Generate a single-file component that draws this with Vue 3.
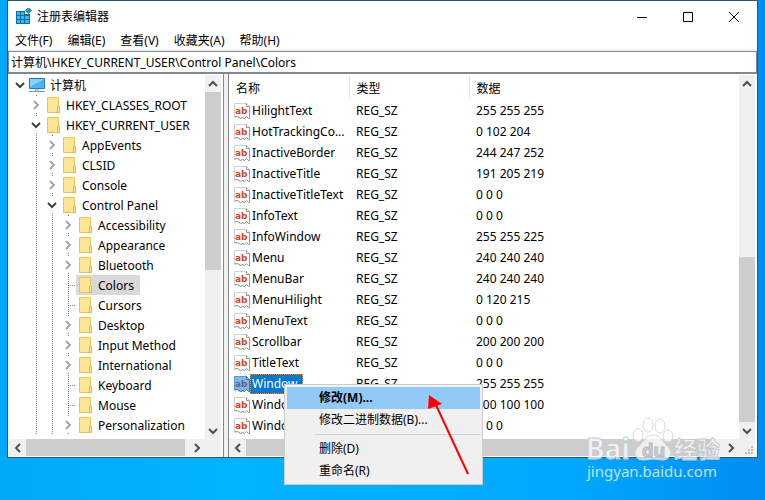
<script setup>
import { ref } from 'vue';

const address = ref('计算机\\HKEY_CURRENT_USER\\Control Panel\\Colors');

const menus = ['文件(F)', '编辑(E)', '查看(V)', '收藏夹(A)', '帮助(H)'];

const tree = [
  { name: '计算机', depth: 0, state: 'open', root: true },
  { name: 'HKEY_CLASSES_ROOT', depth: 1, state: 'closed' },
  { name: 'HKEY_CURRENT_USER', depth: 1, state: 'open' },
  { name: 'AppEvents', depth: 2, state: 'closed' },
  { name: 'CLSID', depth: 2, state: 'closed' },
  { name: 'Console', depth: 2, state: 'closed' },
  { name: 'Control Panel', depth: 2, state: 'open' },
  { name: 'Accessibility', depth: 3, state: 'closed' },
  { name: 'Appearance', depth: 3, state: 'closed' },
  { name: 'Bluetooth', depth: 3, state: 'closed' },
  { name: 'Colors', depth: 3, state: 'leaf' },
  { name: 'Cursors', depth: 3, state: 'leaf' },
  { name: 'Desktop', depth: 3, state: 'closed' },
  { name: 'Input Method', depth: 3, state: 'closed' },
  { name: 'International', depth: 3, state: 'closed' },
  { name: 'Keyboard', depth: 3, state: 'leaf' },
  { name: 'Mouse', depth: 3, state: 'leaf' },
  { name: 'Personalization', depth: 3, state: 'closed' }
];

const values = [
  ['HilightText', '255 255 255'],
  ['HotTrackingCo...', '0 102 204'],
  ['InactiveBorder', '244 247 252'],
  ['InactiveTitle', '191 205 219'],
  ['InactiveTitleText', '0 0 0'],
  ['InfoText', '0 0 0'],
  ['InfoWindow', '255 255 225'],
  ['Menu', '240 240 240'],
  ['MenuBar', '240 240 240'],
  ['MenuHilight', '0 120 215'],
  ['MenuText', '0 0 0'],
  ['Scrollbar', '200 200 200'],
  ['TitleText', '0 0 0'],
  ['Window', '255 255 255'],
  ['WindowFrame', '100 100 100'],
  ['WindowText', '0 0 0']
];

const selectedKey = ref('Colors');
const selectedValue = ref('Window');
</script>

<template>
  <div class="desktop">
    <main class="window">
      <header class="title-bar">
        <svg class="app-icon" width="16" height="16" viewBox="0 0 16 16">
          <path d="M0 3h9v3h5v10H0z" fill="#0c6ea6" />
          <path d="M1 4h3v3H1zM5 4h3v3H5zM1 8h3v3H1zM5 8h3v3H5zM9 8h4v3H9zM1 12h3v3H1zM5 12h3v3H5zM9 12h4v3H9z" fill="#3cb9e8" />
          <path d="M12.500 0l3 2.500-3 2.800-3-2.800z" fill="#2b9bd0" stroke="#0c6ea6" />
        </svg>
        <h1>注册表编辑器</h1>
        <div class="window-buttons">
          <button aria-label="最小化">
            <svg width="12" height="12"><path d="M1 6.500h10" /></svg>
          </button>
          <button aria-label="最大化">
            <svg width="12" height="12"><path d="M1.500 1.500h9v9h-9z" /></svg>
          </button>
          <button aria-label="关闭">
            <svg width="12" height="12"><path d="M1 1l10 10M11 1L1 11" /></svg>
          </button>
        </div>
      </header>

      <nav class="menu-bar">
        <button v-for="item in menus" :key="item">{{ item }}</button>
      </nav>

      <input class="address" v-model="address" aria-label="地址" />

      <div class="panes">
        <section class="pane tree-pane">
          <div class="pane-body">
            <ul class="tree">
              <li v-for="node in tree" :key="node.name" @click="selectedKey = node.name">
                <span
                  v-for="level in node.depth"
                  :key="level"
                  class="cell"
                  :class="{ guide: level > 1 }"
                ></span>
                <span class="cell" :class="[node.state, { guide: !node.root }]">
                  <svg v-if="node.state !== 'leaf'" class="expander" width="12" height="10" viewBox="0 0 12 10">
                    <path v-if="node.state === 'open'" d="M2 3l4 4 4-4" stroke="#404040" />
                    <path v-else d="M4 1l4 4-4 4" stroke="#a6a6a6" />
                  </svg>
                </span>
                <span class="node" :class="{ root: node.root, selected: node.name === selectedKey }">
                  <svg v-if="node.root" width="16" height="16" viewBox="0 0 16 16">
                    <path d="M.5 1.500h15v10H.5z" fill="#4fb3f0" stroke="#2779b5" />
                    <path d="M1 2h14L1 10z" fill="#8ad2fa" />
                    <path d="M6 12h4v2H6z" fill="#b8cbd8" />
                    <path d="M0 14.500h16" stroke="#7894a8" />
                  </svg>
                  <svg v-else width="14" height="16" viewBox="0 0 14 16">
                    <path d="M.5.5h11v9h1v6H.5z" fill="#ffe594" stroke="#e8c552" />
                    <path d="M10.500 9.500h2v6h-2z" fill="#ffe9a6" stroke="#dfb93c" />
                  </svg>
                  <span>{{ node.name }}</span>
                </span>
              </li>
            </ul>
            <div class="scroll vertical">
              <button aria-label="向上滚动"><svg width="10" height="8"><path d="M1 6l4-4 4 4" /></svg></button>
              <div class="track"><div class="thumb"></div></div>
              <button aria-label="向下滚动"><svg width="10" height="8"><path d="M1 2l4 4 4-4" /></svg></button>
            </div>
          </div>
          <div class="scroll horizontal">
            <button aria-label="向左滚动"><svg width="8" height="10"><path d="M6 1L2 5l4 4" /></svg></button>
            <div class="track"><div class="thumb"></div></div>
            <button aria-label="向右滚动"><svg width="8" height="10"><path d="M2 1l4 4-4 4" /></svg></button>
            <span class="corner"></span>
          </div>
        </section>

        <section class="pane list-pane">
          <div class="pane-body">
            <table>
              <thead>
                <tr>
                  <th class="short">名称</th>
                  <th class="short">类型</th>
                  <th>数据</th>
                </tr>
              </thead>
              <tbody>
                <tr
                  v-for="[name, data] in values"
                  :key="name"
                  :class="{ selected: name === selectedValue }"
                  @click="selectedValue = name"
                >
                  <td>
                    <div class="value-name">
                      <svg class="value-icon" width="16" height="16" viewBox="0 0 16 16">
                        <path class="paper" d="M.5.500h12l3 3v12h-1l-2-2-2 2-2-1-2 1-3-2-3 .5z" />
                        <path class="fold" d="M12.500.5v3h3v12h-1l-2-2-2 2-2-1-2 1-3-2-3 .5" fill="none" />
                        <text x="1" y="11">ab</text>
                      </svg>
                      <span>{{ name }}</span>
                    </div>
                  </td>
                  <td>REG_SZ</td>
                  <td>{{ data }}</td>
                </tr>
              </tbody>
            </table>
            <div class="scroll vertical">
              <button aria-label="向上滚动"><svg width="10" height="8"><path d="M1 6l4-4 4 4" /></svg></button>
              <div class="track end"><div class="thumb"></div></div>
              <button aria-label="向下滚动"><svg width="10" height="8"><path d="M1 2l4 4 4-4" /></svg></button>
            </div>
          </div>
          <div class="scroll horizontal">
            <button aria-label="向左滚动"><svg width="8" height="10"><path d="M6 1L2 5l4 4" /></svg></button>
            <div class="track"><div class="thumb"></div></div>
            <button aria-label="向右滚动"><svg width="8" height="10"><path d="M2 1l4 4-4 4" /></svg></button>
            <span class="corner">
              <svg width="10" height="10">
                <path d="M6 0h2v2H6zM3 3h2v2H3zM6 3h2v2H6zM0 6h2v2H0zM3 6h2v2H3zM6 6h2v2H6z" />
              </svg>
            </span>
          </div>
        </section>
      </div>
    </main>

    <div class="context-menu">
      <button class="active">修改(M)...</button>
      <button>修改二进制数据(B)...</button>
      <hr />
      <button>删除(D)</button>
      <button>重命名(R)</button>
    </div>

    <svg class="arrow" width="44" height="84" viewBox="0 0 44 84">
      <path d="M9 11l32 69" stroke="#f00" stroke-width="2" />
      <path d="M2 1l13 9-14 5z" fill="#f00" />
    </svg>

    <svg class="watermark" width="142" height="68" viewBox="0 0 142 68">
      <text class="brand" x="1" y="42">Bai</text>
      <g class="paw">
        <ellipse cx="53" cy="18" rx="5" ry="6.500" />
        <ellipse cx="63" cy="8" rx="5" ry="7" />
        <ellipse cx="75" cy="9" rx="5" ry="7" />
        <ellipse cx="83" cy="19" rx="5" ry="6" />
        <path d="M68 18c7 0 10 7 15 12 5 5 2 13-5 13-4 0-6-1-10-1s-6 1-10 1c-8 0-10-8-5-13 6-5 8-12 15-12z" />
      </g>
      <text class="du" x="57" y="40">du</text>
      <text class="brand cjk" x="89" y="41">经验</text>
      <text class="site" x="2" y="60">jingyan.baidu.com</text>
    </svg>
  </div>
</template>

<style>
body {
  margin: 0;
}
</style>

<style scoped>
* {
  box-sizing: border-box;
}

.desktop {
  position: relative;
  min-height: 100vh;
  padding: 0 7px;
  overflow: hidden;
  background: linear-gradient(90deg, #00a9fa 0%, #00b4ff 30%, #00a8ff 75%, #008df0 100%);
  color: #000;
  font-family: "Noto Sans", "Noto Sans CJK SC", sans-serif;
  font-size: 12px;
}

button {
  padding: 0;
  border: 0;
  background: none;
  color: inherit;
  font: inherit;
}

.window {
  border: 1px solid #245a80;
  background: #fff;
}

.title-bar {
  display: flex;
  align-items: center;
  height: 29px;
  padding-left: 8px;
}

.title-bar h1 {
  margin: 0 0 0 5px;
  font-size: 12px;
  font-weight: normal;
}

.window-buttons {
  display: flex;
  margin-left: auto;
}

.window-buttons button {
  width: 46px;
  height: 28px;
}

.window-buttons svg {
  vertical-align: middle;
  fill: none;
  stroke: #000;
}

.menu-bar {
  display: flex;
  gap: 15px;
  height: 21px;
  padding-left: 7px;
  border-bottom: 2px solid #f0f0f0;
}

.menu-bar button {
  height: 21px;
  line-height: 21px;
}

.address {
  display: block;
  width: 100%;
  height: 23px;
  padding: 0 2px;
  border: 1px solid #828790;
  border-bottom-width: 2px;
  outline: 0;
  color: #000;
  font: inherit;
}

.panes {
  display: flex;
  background: #f0f0f0;
}

.pane {
  display: flex;
  flex-direction: column;
  padding: 1px 2px 1px 1px;
  background: #fff;
}

.tree-pane {
  flex: 0 0 216px;
  margin-right: 4px;
  border-right: 1px solid #828790;
}

.list-pane {
  flex: 1;
  min-width: 0;
  padding-left: 0;
  border-left: 1px solid #828790;
}

.pane-body {
  display: flex;
  flex: 1;
}

.tree {
  flex: 1;
  min-width: 0;
  margin: 0;
  padding: 0 0 4px 3px;
  list-style: none;
}

.tree li {
  display: flex;
  height: 20px;
  white-space: nowrap;
}

.cell {
  display: flex;
  flex: 0 0 16px;
  align-items: center;
  justify-content: center;
}

.guide {
  background: repeating-linear-gradient(#808080 0 1px, transparent 1px 2px) 8px 0 / 1px 100% no-repeat;
}

.leaf {
  background:
    repeating-linear-gradient(#808080 0 1px, transparent 1px 2px) 8px 0 / 1px 100% no-repeat,
    repeating-linear-gradient(90deg, #808080 0 1px, transparent 1px 2px) 8px 10px / 8px 1px no-repeat;
}

.expander {
  box-sizing: content-box;
  padding: 3px 0;
  background: #fff;
  fill: none;
  stroke-width: 2;
}

.node {
  display: flex;
  align-items: center;
  gap: 5px;
  padding: 0 6px 0 3px;
}

.node.root {
  padding-left: 1px;
}

.node.selected {
  background: #d9d9d9;
}

.scroll {
  display: flex;
  background: #f0f0f0;
}

.scroll button {
  display: flex;
  flex: 0 0 17px;
  align-items: center;
  justify-content: center;
}

.scroll button svg {
  fill: none;
  stroke: #505050;
  stroke-width: 2;
}

.vertical {
  flex: 0 0 16px;
  flex-direction: column;
}

.horizontal {
  height: 17px;
}

.track {
  display: flex;
  flex: 1;
}

.vertical .track {
  flex-direction: column;
}

.track.end {
  justify-content: flex-end;
}

.thumb {
  flex: 0 0 98%;
  background: #cdcdcd;
}

.vertical .thumb {
  flex-basis: 54%;
}

.vertical .end .thumb {
  flex-basis: 50%;
}

.corner {
  display: flex;
  flex: 0 0 16px;
  align-items: flex-end;
  justify-content: flex-end;
  fill: #bfbfbf;
}

table {
  flex: 1;
  align-self: flex-start;
  width: 100%;
  border-collapse: collapse;
  table-layout: fixed;
}

th {
  height: 25px;
  padding: 0 7px;
  font-weight: normal;
  text-align: left;
}

th.short {
  width: 120px;
  border-right: 1px solid #e5e5e5;
}

td {
  height: 21px;
  padding: 0 7px;
  line-height: 20px;
}

td:first-child {
  padding: 0 0 0 5px;
}

.value-name {
  display: flex;
  align-items: center;
  white-space: nowrap;
}

.value-name span {
  padding: 0 5px 0 2px;
}

.selected .value-name span {
  background: #0078d7;
  outline: 1px dotted #ff8728;
  outline-offset: -1px;
  color: #fff;
}

.value-icon {
  flex: none;
}

.value-icon text {
  fill: #d2472a;
  font-family: "DejaVu Sans", sans-serif;
  font-size: 9px;
  font-weight: bold;
}

.paper {
  fill: #fff;
  stroke: #d0d0d0;
}

.fold {
  stroke: #999;
}

.selected .paper {
  fill: #7fb7e8;
  stroke: #5b9bd3;
}

.selected .fold {
  stroke: #3279b7;
}

.selected .value-icon text {
  fill: #69608a;
}

.context-menu {
  position: absolute;
  top: 384px;
  left: 284px;
  width: 199px;
  padding: 2px;
  border: 1px solid #ccc;
  background: #f0f0f0;
}

.context-menu button {
  display: block;
  width: 100%;
  height: 22px;
  padding: 0 0 2px 32px;
  text-align: left;
}

.context-menu .active {
  background: #91c9f7;
  font-weight: bold;
}

.context-menu hr {
  margin: 3px 0 3px 28px;
  border: 0;
  border-top: 1px solid #d0d0d0;
}

.arrow {
  position: absolute;
  top: 394px;
  left: 427px;
  fill: none;
}

.watermark {
  position: absolute;
  top: 417px;
  left: 585px;
}

.paw {
  fill: rgba(255, 255, 255, 0.7);
  stroke: #d4d8db;
}

.watermark text {
  fill: rgba(255, 255, 255, 0.75);
}

.watermark .brand {
  stroke: #c4ccd2;
  font-size: 28px;
  font-weight: bold;
}

.watermark .cjk {
  font-size: 23px;
}

.watermark .du {
  fill: #cbcfd2;
  stroke: #b4babf;
  font-size: 18px;
  font-weight: bold;
}

.watermark .site {
  font-size: 15px;
}
</style>
